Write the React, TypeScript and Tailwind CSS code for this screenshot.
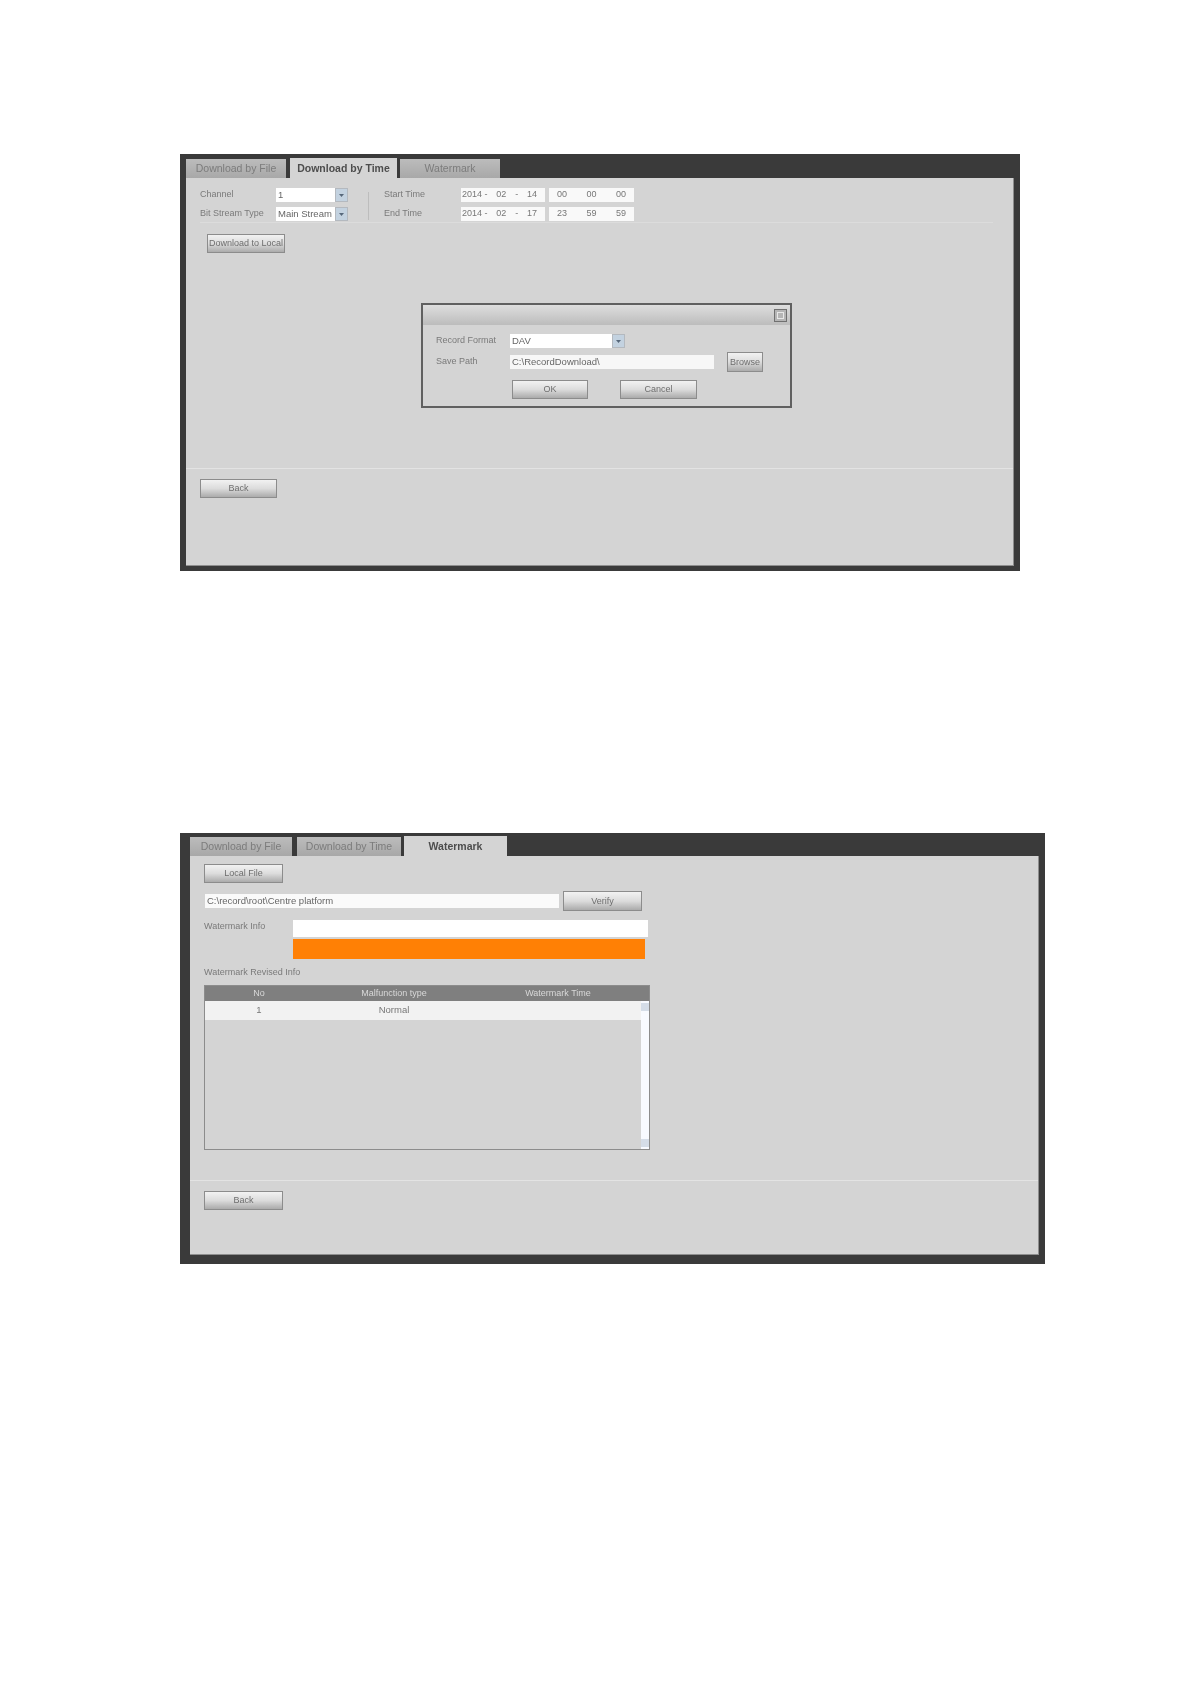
import type { ReactNode } from "react";

const font = "font-['Liberation_Sans',Arial,sans-serif]";

function Btn({ children, className, tall }: { children: ReactNode; className: string; tall?: boolean }) {
  return (
    <button
      className={`${tall ? "h-[20px] leading-[18px]" : "h-[19px] leading-[17px]"} shrink-0 border border-[#8c8c8c] bg-gradient-to-b from-[#f2f2f2] via-[#dcdcdc] to-[#ababab] text-center text-[9px] text-[#6e6e6e] ${className}`}
    >
      {children}
    </button>
  );
}

function Tab({ label, active, className }: { label: string; active?: boolean; className: string }) {
  return (
    <div
      className={
        active
          ? `flex h-[20px] shrink-0 items-center justify-center bg-[#d4d4d4] pt-px text-[10.5px] font-bold text-[#4d4d4d] ${className}`
          : `flex h-[19px] shrink-0 items-center justify-center self-end bg-gradient-to-b from-[#bcbcbc] to-[#a8a8a8] text-[10.5px] text-[#7c7c7c] ${className}`
      }
    >
      {label}
    </div>
  );
}

function Select({ value, className }: { value: string; className: string }) {
  return (
    <div className={`flex h-[14px] items-center bg-white text-[9.5px] text-[#666] ${className}`}>
      <span className="flex-1 pl-[2px]">{value}</span>
      <span className="flex h-[14px] w-[13px] items-center justify-center border border-[#b4b9bf] bg-[#c3d2e0]">
        <svg width="7" height="5" viewBox="0 0 7 5">
          <path d="M1 1h5L3.5 4z" fill="#56677a" />
        </svg>
      </span>
    </div>
  );
}

function DateBox({ parts, className }: { parts: string[]; className: string }) {
  return (
    <div className={`flex h-[14px] items-center justify-between bg-[#f9f9f9] text-[9px] text-[#777] ${className}`}>
      {parts.map((p, i) => (
        <span key={i}>{p}</span>
      ))}
    </div>
  );
}

function Label({ children, className }: { children: ReactNode; className: string }) {
  return <span className={`text-[9px] text-[#7a7a7a] ${className}`}>{children}</span>;
}

function TimeWindow() {
  return (
    <div className="ml-[180px] flex h-[417px] w-[840px] flex-col bg-[#3a3a3a] px-[6px] pb-[5px] pt-[4px]">
      <div className="flex h-[20px] items-end">
        <Tab label="Download by File" className="w-[100px]" />
        <Tab label="Download by Time" active className="ml-[4px] w-[107px]" />
        <Tab label="Watermark" className="ml-[3px] w-[100px]" />
      </div>
      <div className="flex-1 border-b border-r border-[#8e8e8e] bg-[#d4d4d4]">
        <div className="ml-[14px] mt-[10px] flex">
          <div className="flex w-[148px] flex-col gap-[5px]">
            <div className="flex items-center">
              <Label className="w-[76px]">Channel</Label>
              <Select value="1" className="w-[72px]" />
            </div>
            <div className="flex items-center">
              <Label className="w-[76px]">Bit Stream Type</Label>
              <Select value="Main Stream" className="w-[72px]" />
            </div>
          </div>
          <div className="ml-[20px] mr-[15px] mt-[4px] h-[28px] w-px bg-[#bdbdbd]" />
          <div className="flex flex-col gap-[5px]">
            <div className="flex items-center">
              <Label className="w-[77px]">Start Time</Label>
              <DateBox parts={["2014 -", "02", "-", "14"]} className="w-[84px] pl-[1px] pr-[8px]" />
              <DateBox parts={["00", "00", "00"]} className="ml-[4px] w-[85px] px-[8px]" />
            </div>
            <div className="flex items-center">
              <Label className="w-[77px]">End Time</Label>
              <DateBox parts={["2014 -", "02", "-", "17"]} className="w-[84px] pl-[1px] pr-[8px]" />
              <DateBox parts={["23", "59", "59"]} className="ml-[4px] w-[85px] px-[8px]" />
            </div>
          </div>
        </div>
        <div className="ml-[14px] mr-[20px] mt-px h-px bg-[#dcdcdc]" />
        <Btn className="ml-[21px] mt-[11px] block w-[78px]">Download to Local</Btn>
        <div className="ml-[235px] mt-[50px] h-[105px] w-[371px] border-2 border-[#606060]">
          <div className="flex h-[20px] items-center justify-end bg-gradient-to-b from-[#dedede] to-[#bcbcbc] pr-[3px]">
            <span className="flex h-[13px] w-[13px] items-center justify-center border border-[#707070] bg-[#b5b5b5]">
              <span className="block h-[7px] w-[7px] border border-[#e8e8e8]" />
            </span>
          </div>
          <div className="ml-[13px] mt-[9px] flex items-center">
            <Label className="w-[74px]">Record Format</Label>
            <Select value="DAV" className="w-[115px]" />
          </div>
          <div className="ml-[13px] mt-[4px] flex items-center">
            <Label className="w-[74px]">Save Path</Label>
            <div className="flex h-[14px] w-[204px] items-center bg-[#f7f7f7] pl-[2px] text-[9.5px] text-[#666]">C:\RecordDownload\</div>
            <Btn tall className="ml-[13px] w-[36px]">Browse</Btn>
          </div>
          <div className="ml-[89px] mt-[8px] flex gap-[32px]">
            <Btn className="w-[76px]">OK</Btn>
            <Btn className="w-[77px]">Cancel</Btn>
          </div>
        </div>
        <div className="mt-[60px] h-px bg-[#e3e3e3]" />
        <Btn className="ml-[14px] mt-[10px] block w-[77px]">Back</Btn>
      </div>
    </div>
  );
}

function WatermarkWindow() {
  return (
    <div className="ml-[180px] mt-[262px] flex h-[431px] w-[865px] flex-col bg-[#3a3a3a] pb-[9px] pl-[10px] pr-[6px] pt-[3px]">
      <div className="flex h-[20px] items-end">
        <Tab label="Download by File" className="w-[102px]" />
        <Tab label="Download by Time" className="ml-[5px] w-[104px]" />
        <Tab label="Watermark" active className="ml-[3px] w-[103px]" />
      </div>
      <div className="flex-1 border-b border-r border-[#8e8e8e] bg-[#d4d4d4]">
        <Btn className="ml-[14px] mt-[8px] block w-[79px]">Local File</Btn>
        <div className="ml-[15px] mt-[8px] flex items-center">
          <div className="flex h-[14px] w-[354px] items-center bg-[#fafafa] pl-[2px] text-[9.5px] text-[#666]">C:\record\root\Centre platform</div>
          <Btn tall className="ml-[4px] w-[79px]">Verify</Btn>
        </div>
        <div className="ml-[14px] mt-[9px] flex">
          <Label className="w-[89px]">Watermark Info</Label>
          <div>
            <div className="h-[17px] w-[355px] bg-white" />
            <div className="mt-[2px] h-[20px] w-[352px] bg-[#ff8005]" />
          </div>
        </div>
        <Label className="ml-[14px] mt-[8px] block leading-[10px]">Watermark Revised Info</Label>
        <div className="ml-[14px] mt-[8px] flex h-[165px] w-[446px] flex-col border border-[#8c8c8c]">
          <div className="grid h-[15px] shrink-0 grid-cols-[108px_162px_166px] items-center bg-[#7f7f7f] text-center text-[9px] text-[#d8d8d8]">
            <span>No</span>
            <span>Malfunction type</span>
            <span>Watermark Time</span>
          </div>
          <div className="flex flex-1">
            <div className="flex-1">
              <div className="grid h-[19px] grid-cols-[108px_162px_166px] items-center bg-[#f2f2f2] text-center text-[9.5px] text-[#777]">
                <span>1</span>
                <span>Normal</span>
              </div>
            </div>
            <div className="flex w-[12px] flex-col justify-between bg-[#f8faff] py-[2px]">
              <span className="mx-auto block h-[8px] w-[8px] bg-[#d5dde8]" />
              <span className="mx-auto block h-[8px] w-[8px] bg-[#d5dde8]" />
            </div>
          </div>
        </div>
        <div className="mt-[30px] h-px bg-[#e3e3e3]" />
        <Btn className="ml-[14px] mt-[10px] block w-[79px]">Back</Btn>
      </div>
    </div>
  );
}

export default function App() {
  return (
    <div className={`h-[1684px] overflow-hidden bg-white pt-[154px] blur-[0.6px] ${font}`}>
      <TimeWindow />
      <WatermarkWindow />
    </div>
  );
}
